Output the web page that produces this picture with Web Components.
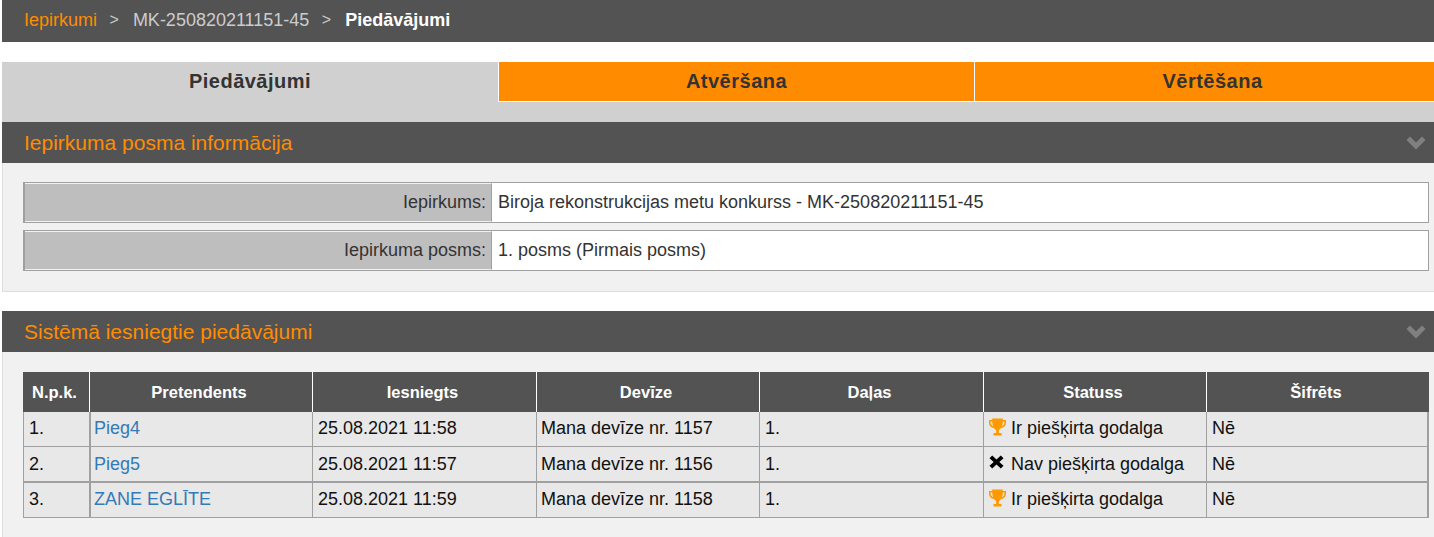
<!DOCTYPE html>
<html lang="lv">
<head>
<meta charset="utf-8">
<title>Piedāvājumi</title>
<style>
  html, body { margin: 0; padding: 0; background: #fff; }
  body { font-family: "Liberation Sans", Arial, sans-serif; font-size: 18px; color: #222; padding-left: 2px; overflow: hidden; }
</style>
</head>
<body>
<bread-crumbs current="Piedāvājumi">
  <a slot="first">Iepirkumi</a>
  <span slot="second">MK-250820211151-45</span>
</bread-crumbs>

<tab-bar>
  <tab-item active>Piedāvājumi</tab-item>
  <tab-item>Atvēršana</tab-item>
  <tab-item>Vērtēšana</tab-item>
</tab-bar>

<info-panel title="Iepirkuma posma informācija" closed-bottom>
  <info-row label="Iepirkums:">Biroja rekonstrukcijas metu konkurss - MK-250820211151-45</info-row>
  <info-row label="Iepirkuma posms:">1. posms (Pirmais posms)</info-row>
</info-panel>

<info-panel title="Sistēmā iesniegtie piedāvājumi" class="second">
  <offers-table></offers-table>
</info-panel>

<script>
class BreadCrumbs extends HTMLElement {
  constructor() {
    super();
    this.attachShadow({ mode: 'open' });
  }

  connectedCallback() {
    this.shadowRoot.innerHTML = `
      <style>
        :host { display: flex; align-items: center; box-sizing: border-box; height: 42px; padding: 0 0 2px 22px; background: #535353; font-size: 18px; color: #ccc; }
        ::slotted([slot="first"]) { color: #ff8c00; }
        .sep { margin: 0 14px 0 12.5px; font-size: 16px; }
        b { color: #fff; }
      </style>
      <slot name="first"></slot><span class="sep">&gt;</span>
      <slot name="second"></slot><span class="sep">&gt;</span>
      <b>${this.getAttribute('current')}</b>
    `;
  }
}
customElements.define('bread-crumbs', BreadCrumbs);

class TabBar extends HTMLElement {
  constructor() {
    super();
    this.attachShadow({ mode: 'open' });
    this.shadowRoot.innerHTML = `
      <style>
        :host { display: grid; grid-template-columns: 496px 476px 476px; height: 60px; margin-top: 20px; background: #d0d0d0; overflow: hidden; }
      </style>
      <slot></slot>
    `;
  }
}
customElements.define('tab-bar', TabBar);

class TabItem extends HTMLElement {
  constructor() {
    super();
    this.attachShadow({ mode: 'open' });
    this.shadowRoot.innerHTML = `
      <style>
        :host { display: block; box-sizing: border-box; height: 40px; padding-top: 8px; text-align: center; font-size: 20px; font-weight: bold; letter-spacing: 0.5px; color: #333; background: #ff8c00; border-left: 1px solid #fff; border-bottom: 1px solid #fff; }
        :host([active]) { background: transparent; border: 0; }
      </style>
      <slot></slot>
    `;
  }
}
customElements.define('tab-item', TabItem);

class InfoPanel extends HTMLElement {
  constructor() {
    super();
    this.attachShadow({ mode: 'open' });
  }

  connectedCallback() {
    this.shadowRoot.innerHTML = `
      <style>
        :host { display: block; }
        :host(.second) { margin-top: 19px; }
        header { display: flex; align-items: center; justify-content: space-between; height: 41px; padding: 0 8px 0 22px; background: #535353; color: #ff8c00; font-size: 21px; }
        .body { display: flex; flex-direction: column; gap: 7px; padding: 19px 5px 20px 20px; background: #f1f1f1; border-left: 1px solid #ddd; }
        :host([closed-bottom]) .body { border-bottom: 1px solid #ddd; }
        :host(.second) .body { padding-top: 20px; }
      </style>
      <header>
        <span>${this.getAttribute('title')}</span>
        <svg width="20" height="14" viewBox="0 0 20 14"><path d="M0.5 4 L4 0.5 L10 6.5 L16 0.5 L19.5 4 L10 13.5 Z" fill="#808080"/></svg>
      </header>
      <div class="body"><slot></slot></div>
    `;
  }
}
customElements.define('info-panel', InfoPanel);

class InfoRow extends HTMLElement {
  constructor() {
    super();
    this.attachShadow({ mode: 'open' });
  }

  connectedCallback() {
    this.shadowRoot.innerHTML = `
      <style>
        :host { display: grid; grid-template-columns: 467px 1fr; box-sizing: border-box; height: 41px; border: 1px solid #a0a0a0; border-left-width: 2px; background: #fff; color: #333; }
        .label { display: flex; align-items: center; justify-content: flex-end; padding-right: 5px; background: #bebebe; border-top: 1px solid #f1f1f1; border-bottom: 1px solid #f1f1f1; border-right: 1px solid #a0a0a0; }
        .value { display: flex; align-items: center; padding-left: 6px; }
      </style>
      <div class="label">${this.getAttribute('label')}</div>
      <div class="value"><span><slot></slot></span></div>
    `;
  }
}
customElements.define('info-row', InfoRow);

const trophy = `<svg width="17" height="18" viewBox="0 0 17 18"><path d="M3.2 0.5h10.6v1.6h3.2v3c0 2.6-1.9 4.6-4.9 5-0.7 0.9-1.4 1.5-2.2 1.8v3h2.6v2.6H4.5v-2.6h2.6v-3c-0.8-0.3-1.5-0.9-2.2-1.8-3-0.4-4.9-2.4-4.9-5v-3h3.2zM1.6 3.6v1.5c0 1.4 0.9 2.5 2.4 3.1-0.4-1.2-0.7-2.8-0.8-4.6zM15.4 3.6h-1.6c-0.1 1.8-0.4 3.4-0.8 4.6 1.5-0.6 2.4-1.7 2.4-3.1z" fill="#f90" fill-rule="evenodd"/></svg>`;
const cross = `<svg width="15" height="14" viewBox="0 0 15 14"><path d="M0.5 3.2 L3.2 0.5 L7.5 4.5 L11.8 0.5 L14.5 3.2 L10.3 7 L14.5 10.8 L11.8 13.5 L7.5 9.5 L3.2 13.5 L0.5 10.8 L4.7 7 Z" fill="#000"/></svg>`;

const offers = [
  { nr: '1.', name: 'Pieg4', date: '25.08.2021 11:58', code: 'Mana devīze nr. 1157', part: '1.', won: true },
  { nr: '2.', name: 'Pieg5', date: '25.08.2021 11:57', code: 'Mana devīze nr. 1156', part: '1.', won: false },
  { nr: '3.', name: 'ZANE EGLĪTE', date: '25.08.2021 11:59', code: 'Mana devīze nr. 1158', part: '1.', won: true },
];

class OffersTable extends HTMLElement {
  constructor() {
    super();
    this.attachShadow({ mode: 'open' });
  }

  connectedCallback() {
    const heads = ['N.p.k.', 'Pretendents', 'Iesniegts', 'Devīze', 'Daļas', 'Statuss', 'Šifrēts'];
    const rows = offers.map(o => `
      <tr>
        <td>${o.nr}</td>
        <td><a>${o.name}</a></td>
        <td>${o.date}</td>
        <td>${o.code}</td>
        <td>${o.part}</td>
        <td><span class="status"><span class="icon">${o.won ? trophy : cross}</span>${o.won ? 'Ir piešķirta godalga' : 'Nav piešķirta godalga'}</span></td>
        <td>Nē</td>
      </tr>`).join('');

    this.shadowRoot.innerHTML = `
      <style>
        :host { display: block; }
        table { width: 1406px; border-collapse: separate; border-spacing: 0; table-layout: fixed; font-size: 18px; color: #111; }
        th { height: 40px; padding: 0 4px 0 0; box-sizing: border-box; background: #535353; color: #fff; font-size: 16.5px; font-weight: bold; border-left: 1px solid #fff; }
        th:first-child { border-left: 0; padding-right: 3px; }
        td { height: 35px; box-sizing: border-box; padding: 0 4px 2px 5px; background: #e8e8e8; border-bottom: 1px solid #a0a0a0; border-left: 1px solid #a0a0a0; white-space: nowrap; }
        td:nth-child(2) { border-left-width: 2px; padding-left: 3px; }
        td:nth-child(4) { padding-left: 4px; }
        td:last-child { border-right: 2px solid #a0a0a0; }
        tr:nth-child(2) td { height: 36px; border-bottom-width: 2px; padding-bottom: 0; }
        a { color: #337ab7; }
        .status { display: flex; align-items: center; }
        .icon { display: flex; width: 22px; margin: -2px 0 0 0; }
        tr:nth-child(2) .icon { margin-top: -4px; }
      </style>
      <table>
        <colgroup>
          <col style="width:66px"><col style="width:223px"><col style="width:224px"><col style="width:223px"><col style="width:224px"><col style="width:223px"><col style="width:223px">
        </colgroup>
        <thead><tr>${heads.map(h => `<th>${h}</th>`).join('')}</tr></thead>
        <tbody>${rows}</tbody>
      </table>
    `;
  }
}
customElements.define('offers-table', OffersTable);
</script>
</body>
</html>
